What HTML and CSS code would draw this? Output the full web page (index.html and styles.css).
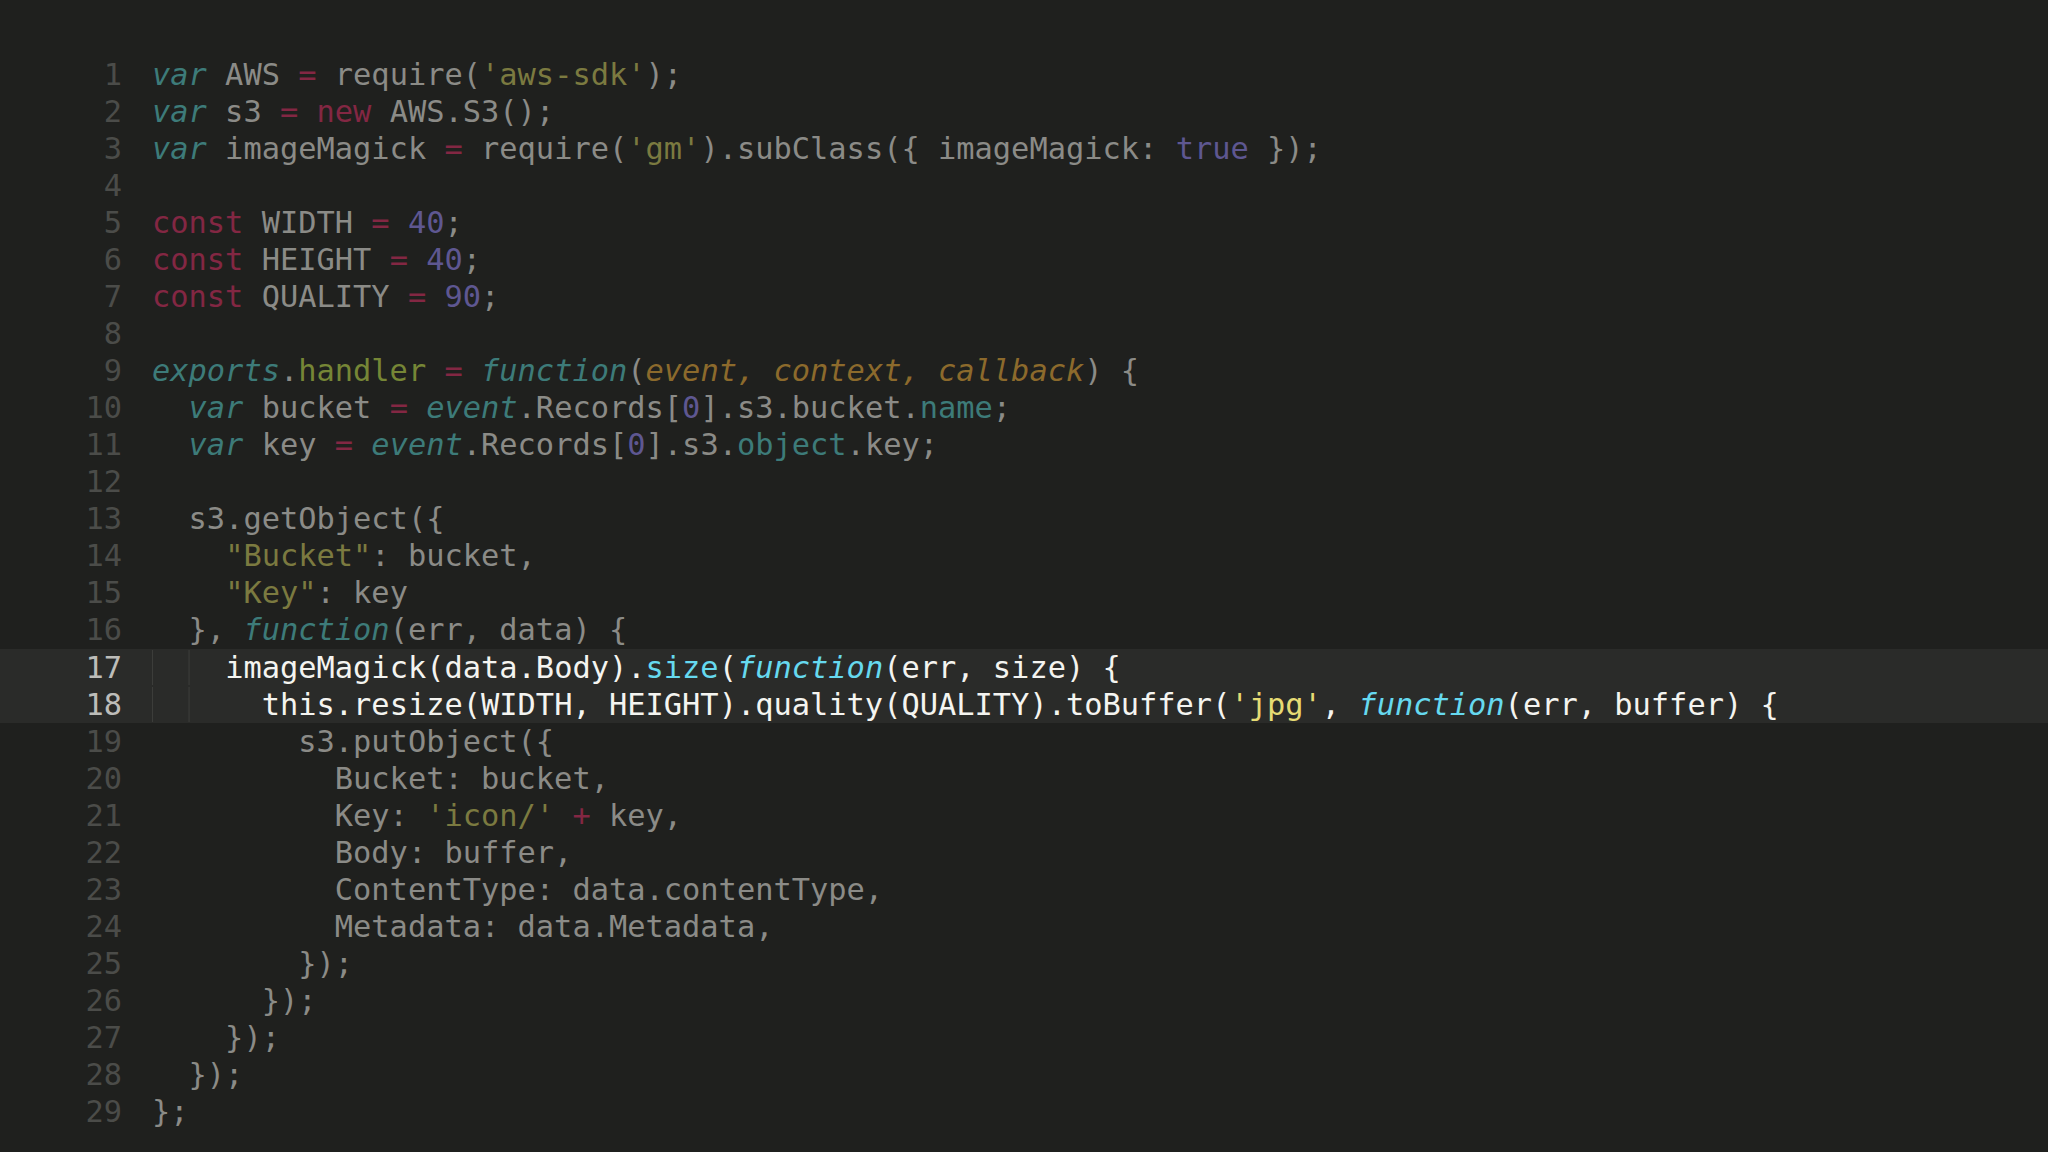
FILE: index.html
```html
<!DOCTYPE html>
<html>
<head>
<meta charset="utf-8">
<link rel="stylesheet" href="styles.css">
</head>
<body>
<div class="editor">
<div class="line"><span class="ln">1</span><span class="code"><span class="kw">var</span> AWS <span class="op">=</span> require(<span class="str">'aws-sdk'</span>);</span></div>
<div class="line"><span class="ln">2</span><span class="code"><span class="kw">var</span> s3 <span class="op">=</span> <span class="op">new</span> AWS.S3();</span></div>
<div class="line"><span class="ln">3</span><span class="code"><span class="kw">var</span> imageMagick <span class="op">=</span> require(<span class="str">'gm'</span>).subClass({ imageMagick: <span class="num">true</span> });</span></div>
<div class="line"><span class="ln">4</span><span class="code"></span></div>
<div class="line"><span class="ln">5</span><span class="code"><span class="op">const</span> WIDTH <span class="op">=</span> <span class="num">40</span>;</span></div>
<div class="line"><span class="ln">6</span><span class="code"><span class="op">const</span> HEIGHT <span class="op">=</span> <span class="num">40</span>;</span></div>
<div class="line"><span class="ln">7</span><span class="code"><span class="op">const</span> QUALITY <span class="op">=</span> <span class="num">90</span>;</span></div>
<div class="line"><span class="ln">8</span><span class="code"></span></div>
<div class="line"><span class="ln">9</span><span class="code"><span class="kw">exports</span>.<span class="fn">handler</span> <span class="op">=</span> <span class="kw">function</span>(<span class="param">event, context, callback</span>) {</span></div>
<div class="line"><span class="ln">10</span><span class="code">  <span class="kw">var</span> bucket <span class="op">=</span> <span class="kw">event</span>.Records[<span class="num">0</span>].s3.bucket.<span class="sup">name</span>;</span></div>
<div class="line"><span class="ln">11</span><span class="code">  <span class="kw">var</span> key <span class="op">=</span> <span class="kw">event</span>.Records[<span class="num">0</span>].s3.<span class="sup">object</span>.key;</span></div>
<div class="line"><span class="ln">12</span><span class="code"></span></div>
<div class="line"><span class="ln">13</span><span class="code">  s3.getObject({</span></div>
<div class="line"><span class="ln">14</span><span class="code">    <span class="str">"Bucket"</span>: bucket,</span></div>
<div class="line"><span class="ln">15</span><span class="code">    <span class="str">"Key"</span>: key</span></div>
<div class="line"><span class="ln">16</span><span class="code">  }, <span class="kw">function</span>(err, data) {</span></div>
<div class="line hl"><span class="ln">17</span><span class="code"><span class="guide">    </span>imageMagick(data.Body).<span class="cy">size</span>(<span class="cy it">function</span>(err, size) {</span></div>
<div class="line hl"><span class="ln">18</span><span class="code"><span class="guide">    </span>  this.resize(WIDTH, HEIGHT).quality(QUALITY).toBuffer(<span class="ye">'jpg'</span>, <span class="cy it">function</span>(err, buffer) {</span></div>
<div class="line"><span class="ln">19</span><span class="code">        s3.putObject({</span></div>
<div class="line"><span class="ln">20</span><span class="code">          Bucket: bucket,</span></div>
<div class="line"><span class="ln">21</span><span class="code">          Key: <span class="str">'icon/'</span> <span class="op">+</span> key,</span></div>
<div class="line"><span class="ln">22</span><span class="code">          Body: buffer,</span></div>
<div class="line"><span class="ln">23</span><span class="code">          ContentType: data.contentType,</span></div>
<div class="line"><span class="ln">24</span><span class="code">          Metadata: data.Metadata,</span></div>
<div class="line"><span class="ln">25</span><span class="code">        });</span></div>
<div class="line"><span class="ln">26</span><span class="code">      });</span></div>
<div class="line"><span class="ln">27</span><span class="code">    });</span></div>
<div class="line"><span class="ln">28</span><span class="code">  });</span></div>
<div class="line"><span class="ln">29</span><span class="code">};</span></div>
</div>
</body>
</html>
```

FILE: styles.css
```css
html, body {
  margin: 0;
  padding: 0;
  background: #1f201e;
  overflow: hidden;
  height: 1152px;
}

.editor {
  padding-top: 56px;
  font-family: "DejaVu Sans Mono", "Liberation Mono", monospace;
  font-size: 30.37px;
  color: #8b8b87;
}

.line {
  display: flex;
  height: 37.04px;
  line-height: 37.04px;
  white-space: pre;
}

.ln {
  flex: 0 0 auto;
  width: 122px;
  padding-right: 30px;
  text-align: right;
  color: #4b4c49;
}

.code {
  flex: 1 1 auto;
}

.hl {
  background: #2a2b29;
  color: #f4f4f0;
}

.hl .ln {
  color: #bdbdb9;
}

.guide {
  background-image: linear-gradient(to right, #3c3d3a 0, #3c3d3a 1px, transparent 1px);
  background-size: 36.56px 100%;
  background-repeat: repeat-x;
}

.kw {
  color: #3d7b79;
  font-style: italic;
}

.op {
  color: #832743;
}

.str {
  color: #7b7a40;
}

.num {
  color: #5e5791;
}

.fn {
  color: #768636;
}

.param {
  color: #8c6a2c;
  font-style: italic;
}

.sup {
  color: #3d7b79;
}

.cy {
  color: #66d9ef;
}

.it {
  font-style: italic;
}

.ye {
  color: #e6db74;
}
```
